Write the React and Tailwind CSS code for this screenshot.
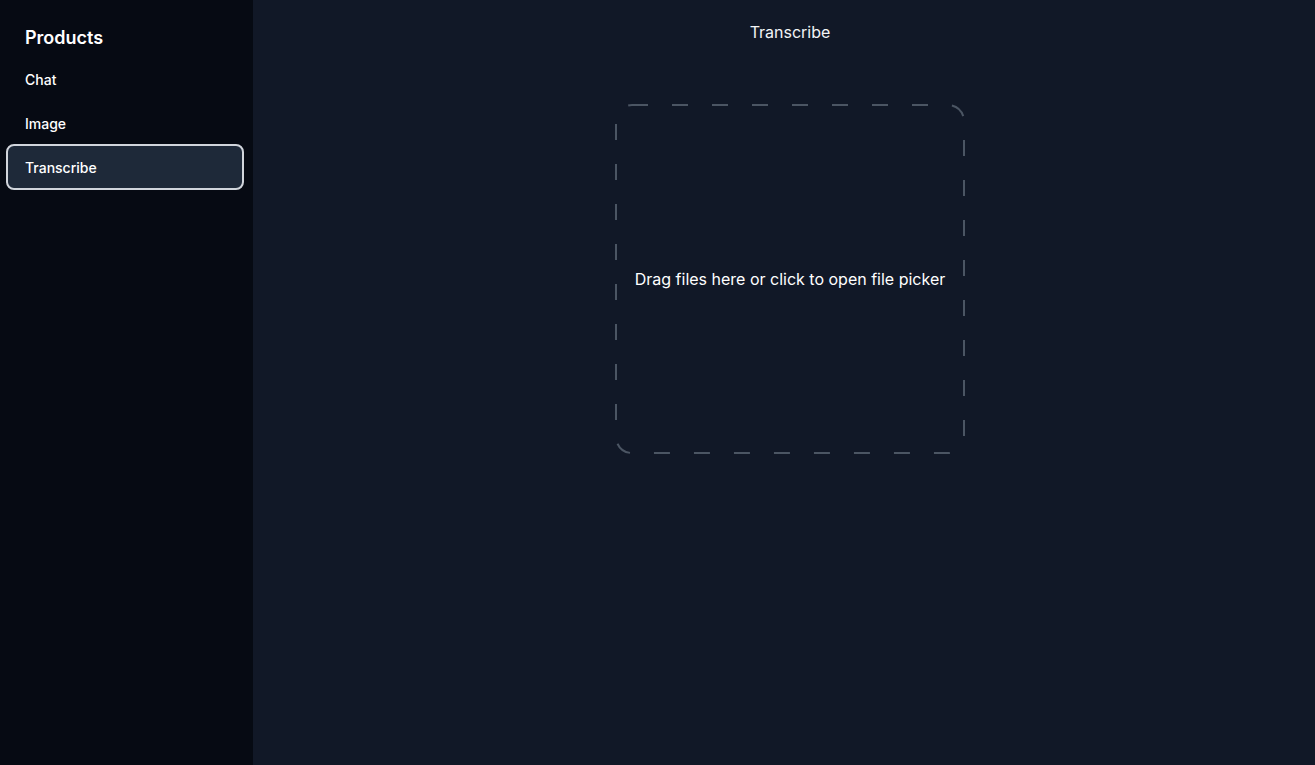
export default function App() {
  const items = ['Chat', 'Image', 'Transcribe']
  const active = 'Transcribe'

  return (
    <div className="flex h-[765px] w-full bg-[#111827] text-white" style={{ fontFamily: 'Inter, "Noto Sans", sans-serif' }}>
      <aside className="w-[253px] shrink-0 bg-[#060a13] pl-[6px] pr-[9px] pt-[26px]">
        <h2 className="pl-[19px] text-[18px] font-semibold leading-[24px] text-white">Products</h2>
        <nav className="mt-[7px] flex flex-col">
          {items.map((name) => (
            <div
              key={name}
              className={
                'flex h-[44px] items-center rounded-lg border-2 pl-[17px] text-[14px] font-medium ' +
                (name === active ? '-mt-[1px] h-[46px] border-gray-300 bg-gray-800' : 'border-transparent')
              }
            >
              {name}
            </div>
          ))}
        </nav>
      </aside>

      <main className="flex flex-1 flex-col items-center pl-3 pt-[22px]">
        <h1 className="text-[16px] leading-[20px] text-gray-100">Transcribe</h1>
        <div className="relative mt-[62px] flex h-[350px] w-[350px] items-center justify-center">
          <svg className="absolute inset-0" width="350" height="350">
            <rect
              x="1"
              y="1"
              width="348"
              height="348"
              rx="16"
              ry="16"
              fill="none"
              stroke="#4b5563"
              strokeWidth="2"
              strokeDasharray="16 24"
              strokeDashoffset="0"
            />
          </svg>
          <p className="relative text-[16px] text-white">Drag files here or click to open file picker</p>
        </div>
      </main>
    </div>
  )
}
